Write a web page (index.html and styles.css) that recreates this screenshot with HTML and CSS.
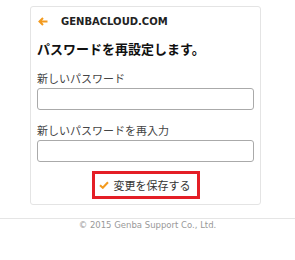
FILE: index.html
```html
<!DOCTYPE html>
<html>
<head>
    <title>GENBACLOUD - パスワード再設定</title>
    <meta name="viewport" content="width=device-width, initial-scale=1.0">
    <link rel="stylesheet" href="styles.css">
</head>
<body>
    <div class="card">
        <div class="card-header">
            <svg class="back" width="10" height="9" viewBox="0 0 10 9">
                <path d="M9.5 4.5H2M5 1L1.5 4.5L5 8" fill="none" stroke="#f39a1e" stroke-width="2"/>
            </svg>
            <span class="brand">GENBACLOUD.COM</span>
        </div>

        <h2 class="title">パスワードを再設定します。</h2>

        <form class="reset-form">
            <label class="field-label" for="pw1">新しいパスワード</label>
            <input class="field" type="password" id="pw1">

            <label class="field-label second" for="pw2">新しいパスワードを再入力</label>
            <input class="field" type="password" id="pw2">

            <div class="actions">
                <button type="button" class="save-button">
                    <svg width="10" height="8" viewBox="0 0 10 8">
                        <path d="M1 4.2L3.8 6.8L9 1.2" fill="none" stroke="#f39a1e" stroke-width="2"/>
                    </svg>
                    変更を保存する
                </button>
            </div>
        </form>
    </div>

    <footer class="page-footer">
        &copy; 2015 Genba Support Co., Ltd.
    </footer>
</body>
</html>
```

FILE: styles.css
```css
body {
    background-color: #ffffff;
    font-family: "Noto Sans CJK JP", "DejaVu Sans", sans-serif;
    margin: 0;
    padding: 0;
}

.card {
    margin: 6px 0 0 30px;
    width: 217px; /* 229 total with border + padding */
    padding: 0 6px 5px 6px;
    border: 1px solid #e4e4e4;
    border-radius: 3px;
}

.card-header {
    display: flex;
    align-items: center;
    height: 28px;
}

.back {
    margin-left: 1px;
}

.brand {
    font-family: "DejaVu Sans", sans-serif;
    font-weight: bold;
    font-size: 10px;
    color: #222;
    margin-left: 13px;
}

.title {
    margin: 4px 0 0 0;
    font-size: 13px;
    line-height: 20px;
    font-weight: bold;
    color: #111;
}

.reset-form {
    display: flex;
    flex-direction: column;
}

.field-label {
    margin-top: 11px;
    font-size: 11px;
    line-height: 16px;
    color: #444;
}

.field-label.second {
    margin-top: 12px;
}

.field {
    margin-top: 2px;
    box-sizing: border-box;
    height: 22px;
    border: 1px solid #aaaaaa;
    border-radius: 3px;
    padding: 0 4px;
}

.actions {
    display: flex;
    justify-content: center;
    margin-top: 9px;
}

.save-button {
    display: flex;
    align-items: center;
    gap: 5px;
    height: 28px;
    padding: 0 6px 0 4px;
    background-color: #ffffff;
    border: 3px solid #e41e26; /* red highlight box */
    font-family: "Noto Sans CJK JP", sans-serif;
    font-size: 11px;
    color: #333;
    cursor: pointer;
}

.page-footer {
    margin-top: 13px;
    border-top: 1px solid #e5e5e5;
    text-align: center;
    font-family: "DejaVu Sans", sans-serif;
    font-size: 8.5px;
    line-height: 12px;
    color: #999;
}
```
